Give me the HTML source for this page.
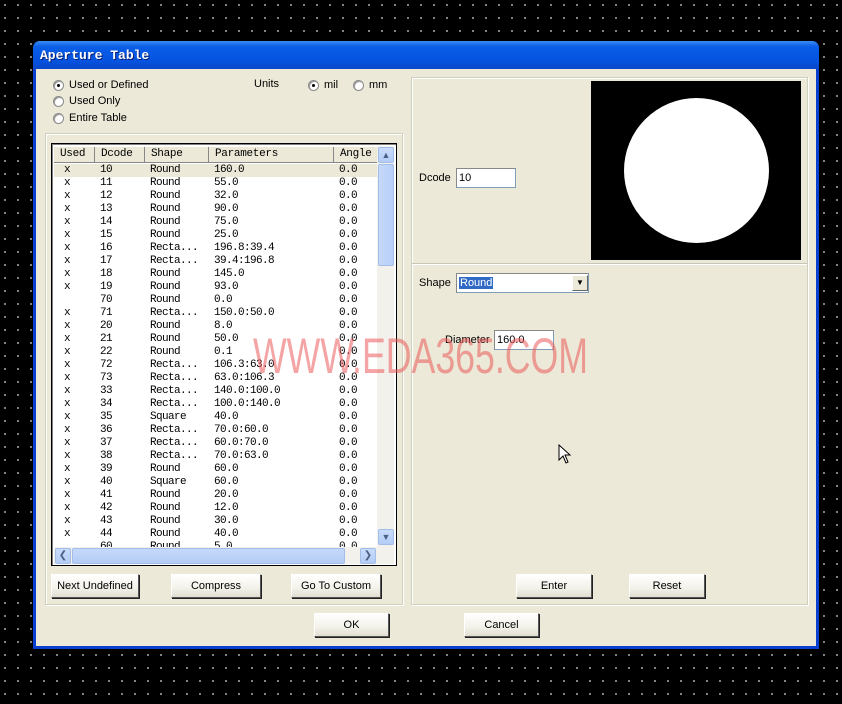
<!DOCTYPE html>
<html><head><meta charset="utf-8"><style>
*{margin:0;padding:0;box-sizing:border-box}
body{width:842px;height:704px;overflow:hidden;background-color:#000;background-image:radial-gradient(circle at 1px 1px,#9a9a9a 0.8px,transparent 1.2px);background-size:13px 13px;background-position:4px 4px;position:relative;font-family:"Liberation Sans",sans-serif;font-size:11px;color:#000}
.a{position:absolute}
.dlg{left:33px;top:41px;width:786px;height:608px;background:#0a3fd0;border-radius:7px 7px 0 0}
.title{left:33px;top:41px;width:786px;height:28px;border-radius:7px 7px 0 0;background:linear-gradient(#3b8cf5,#0a5ee6 20%,#0553e0 70%,#0a48c8);}
.tt{left:40px;top:48px;color:#fff;font-family:"Liberation Mono",monospace;font-weight:bold;font-size:13px;text-shadow:1px 1px #0a1f70}
.body{left:36px;top:69px;width:780px;height:577px;background:#ECE9D8}
.grp{border:1px solid #d0d0bf;box-shadow:inset 1px 1px #fff,1px 1px #fff}
.btn{position:absolute;height:24px;background:linear-gradient(#fff,#f3f2ea 60%,#e0ddd0);border:1px solid #fff;border-right-color:#555;border-bottom-color:#555;box-shadow:1px 1px #222;text-align:center;line-height:22px;font-size:11px}
.radio{position:absolute;width:11px;height:11px;border-radius:50%;background:#fff;border:1px solid #8a8a8a;box-shadow:inset 1px 1px #999}
.radio.on::after{content:"";position:absolute;left:3px;top:3px;width:3px;height:3px;background:#000;border-radius:50%}
.lv{left:51px;top:143px;width:346px;height:423px;background:#fff;border:1px solid #000;box-shadow:inset 1px 1px #808080;overflow:hidden}
.hd{position:absolute;top:3px;height:16px;background:#ECE9D8;border-right:1px solid #888;border-bottom:1px solid #888;font-family:"Liberation Mono",monospace;font-size:11px;padding-left:6px;line-height:15px;letter-spacing:-0.3px}
.row{position:absolute;left:2px;width:324px;height:13px;font-family:"Liberation Mono",monospace;font-size:11px;line-height:13px;letter-spacing:-0.6px}
.row span{position:absolute}
.inp{position:absolute;background:#fff;border:1px solid #7f9db9;border-top-color:#888;border-left-color:#888;height:20px;line-height:18px;padding-left:2px;font-size:11px}
</style></head><body>
<div class="a dlg"></div>
<div class="a title"></div>
<div class="a tt">Aperture Table</div>
<div class="a body"></div>

<div class="radio on" style="left:53px;top:80px"></div><div class="a" style="left:69px;top:79px">Used or Defined</div>
<div class="radio" style="left:53px;top:96px"></div><div class="a" style="left:69px;top:95px">Used Only</div>
<div class="radio" style="left:53px;top:113px"></div><div class="a" style="left:69px;top:112px">Entire Table</div>
<div class="a" style="left:254px;top:78px">Units</div>
<div class="radio on" style="left:308px;top:80px"></div><div class="a" style="left:324px;top:79px">mil</div>
<div class="radio" style="left:353px;top:80px"></div><div class="a" style="left:369px;top:79px">mm</div>

<div class="a grp" style="left:45px;top:133px;width:358px;height:472px"></div>
<div class="a lv">
<div class="hd" style="left:2px;width:41px">Used</div>
<div class="hd" style="left:43px;width:50px">Dcode</div>
<div class="hd" style="left:93px;width:64px">Shape</div>
<div class="hd" style="left:157px;width:125px">Parameters</div>
<div class="hd" style="left:282px;width:44px">Angle</div>
<div id="rows"></div>
<div class="a" style="left:325px;top:2px;width:17px;height:401px;background:#f3f1ec"></div>
<div class="a" style="left:326px;top:3px;width:16px;height:16px;background:linear-gradient(#c8dcfc,#b4cdf6);border:1px solid #a4bde8;border-radius:2px;color:#4d6185;font-size:9px;text-align:center;line-height:14px">&#9650;</div>
<div class="a" style="left:326px;top:20px;width:16px;height:102px;background:linear-gradient(90deg,#c6d9fb,#b9cff7);border:1px solid #a4bde8;border-radius:2px"></div>
<div class="a" style="left:326px;top:385px;width:16px;height:16px;background:linear-gradient(#c8dcfc,#b4cdf6);border:1px solid #a4bde8;border-radius:2px;color:#4d6185;font-size:9px;text-align:center;line-height:14px">&#9660;</div>
<div class="a" style="left:2px;top:403px;width:340px;height:17px;background:#f3f1ec"></div>
<div class="a" style="left:3px;top:404px;width:16px;height:16px;background:linear-gradient(#c8dcfc,#b4cdf6);border:1px solid #a4bde8;border-radius:2px;color:#4d6185;font-size:10px;text-align:center;line-height:14px">&#10094;</div>
<div class="a" style="left:20px;top:404px;width:273px;height:16px;background:linear-gradient(#c6d9fb,#b4ccf5);border:1px solid #a4bde8;border-radius:2px"></div>
<div class="a" style="left:308px;top:404px;width:16px;height:16px;background:linear-gradient(#c8dcfc,#b4cdf6);border:1px solid #a4bde8;border-radius:2px;color:#4d6185;font-size:10px;text-align:center;line-height:14px">&#10095;</div>
</div>

<div class="btn" style="left:51px;top:574px;width:88px">Next Undefined</div>
<div class="btn" style="left:171px;top:574px;width:90px">Compress</div>
<div class="btn" style="left:291px;top:574px;width:90px">Go To Custom</div>

<div class="a grp" style="left:411px;top:77px;width:397px;height:528px"></div>
<div class="a" style="left:412px;top:263px;width:395px;height:2px;border-top:1px solid #c8c6b6;border-bottom:1px solid #fff"></div>
<div class="a" style="left:591px;top:81px;width:210px;height:179px;background:#000"></div>
<div class="a" style="left:624px;top:98px;width:145px;height:145px;border-radius:50%;background:#fff"></div>
<div class="a" style="left:419px;top:172px">Dcode</div>
<div class="inp" style="left:456px;top:168px;width:60px">10</div>
<div class="a" style="left:419px;top:277px">Shape</div>
<div class="inp" style="left:456px;top:273px;width:133px"><span style="background:#316ac5;color:#fff;padding:0 1px">Round</span></div>
<div class="a" style="left:572px;top:275px;width:16px;height:16px;background:#ECE9D8;border:1px solid #fff;border-right-color:#666;border-bottom-color:#666;font-size:8px;text-align:center;line-height:14px">&#9660;</div>
<div class="a" style="left:445px;top:334px">Diameter</div>
<div class="inp" style="left:494px;top:330px;width:60px">160.0</div>
<div class="btn" style="left:516px;top:574px;width:76px">Enter</div>
<div class="btn" style="left:629px;top:574px;width:76px">Reset</div>
<div class="btn" style="left:314px;top:613px;width:75px">OK</div>
<div class="btn" style="left:464px;top:613px;width:75px">Cancel</div>

<svg class="a" style="left:250px;top:330px" width="345" height="48"><text x="3" y="43" font-family="Liberation Sans" font-size="50" fill="rgba(235,90,90,0.55)" textLength="335" lengthAdjust="spacingAndGlyphs">WWW.EDA365.COM</text></svg>
<svg class="a" style="left:558px;top:444px" width="14" height="22"><path d="M1 1 L1 16 L5 12 L8 19 L10 18 L7 11 L12 11 Z" fill="#fff" stroke="#000" stroke-width="1"/></svg>

<script>
var d=[["x","10","Round","160.0"],["x","11","Round","55.0"],["x","12","Round","32.0"],["x","13","Round","90.0"],["x","14","Round","75.0"],["x","15","Round","25.0"],["x","16","Recta...","196.8:39.4"],["x","17","Recta...","39.4:196.8"],["x","18","Round","145.0"],["x","19","Round","93.0"],["","70","Round","0.0"],["x","71","Recta...","150.0:50.0"],["x","20","Round","8.0"],["x","21","Round","50.0"],["x","22","Round","0.1"],["x","72","Recta...","106.3:63.0"],["x","73","Recta...","63.0:106.3"],["x","33","Recta...","140.0:100.0"],["x","34","Recta...","100.0:140.0"],["x","35","Square","40.0"],["x","36","Recta...","70.0:60.0"],["x","37","Recta...","60.0:70.0"],["x","38","Recta...","70.0:63.0"],["x","39","Round","60.0"],["x","40","Square","60.0"],["x","41","Round","20.0"],["x","42","Round","12.0"],["x","43","Round","30.0"],["x","44","Round","40.0"],["","60","Round","5.0"]];
var h="";d.forEach(function(r,i){h+='<div class="row" style="top:'+(20+i*13)+'px;'+(i==0?'background:#ECE9D8':'')+'"><span style="left:10px">'+r[0]+'</span><span style="left:46px">'+r[1]+'</span><span style="left:96px">'+r[2]+'</span><span style="left:160px">'+r[3]+'</span><span style="left:285px">0.0</span></div>';});
document.getElementById("rows").innerHTML=h;
</script>
</body></html>
